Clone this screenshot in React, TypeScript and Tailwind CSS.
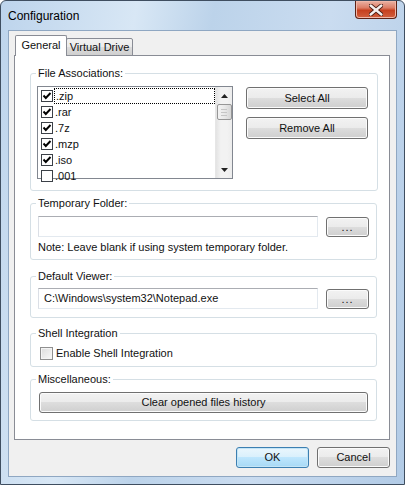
const font = { fontFamily: '"Liberation Sans", Arial, sans-serif' };

const extensions = [
  { ext: ".zip", checked: true },
  { ext: ".rar", checked: true },
  { ext: ".7z", checked: true },
  { ext: ".mzp", checked: true },
  { ext: ".iso", checked: true },
  { ext: ".001", checked: false },
];

function ListCheck({ checked }: { checked: boolean }) {
  return (
    <svg width="12" height="12" viewBox="0 0 12 12" className="shrink-0">
      <rect x="0.5" y="0.5" width="11" height="11" fill="#fff" stroke="#3b4047" />
      {checked && (
        <path d="M2.5 5.5 L4.8 8 L9.5 3" fill="none" stroke="#000" strokeWidth="1.9" />
      )}
    </svg>
  );
}

function Button({
  children,
  className = "",
  primary = false,
}: {
  children: React.ReactNode;
  className?: string;
  primary?: boolean;
}) {
  return (
    <button
      className={`rounded-[3px] border text-[11px] text-[#111] leading-none flex items-center justify-center ${
        primary
          ? "border-[#3c7fb1] bg-[linear-gradient(#eaf6fd_0%,#d9f0fc_50%,#bee6fd_50%,#a7d9f5_100%)] shadow-[inset_0_0_0_1px_#c4e5f6]"
          : "border-[#707070] bg-[linear-gradient(#f2f2f2_0%,#ebebeb_50%,#dddddd_50%,#cfcfcf_100%)] shadow-[inset_0_0_0_1px_#fbfbfb]"
      } ${className}`}
    >
      {children}
    </button>
  );
}

function Group({
  label,
  className = "",
  inner = "",
  children,
}: {
  label: string;
  className?: string;
  inner?: string;
  children: React.ReactNode;
}) {
  return (
    <fieldset className={`border border-[#d5dfe5] rounded-[3px] ${className}`}>
      <legend className="ml-[5px] px-[2px] text-[11px] leading-[13px] text-[#111]">
        {label}
      </legend>
      <div className={inner}>{children}</div>
    </fieldset>
  );
}

function TextBox({ value = "" }: { value?: string }) {
  return (
    <div className="w-[280px] h-[21px] border border-[#e3e9ef] border-t-[#abadb3] border-l-[#dbdfe6] bg-white flex items-center pl-[5px] text-[11px] text-[#111]">
      {value}
    </div>
  );
}

function Scrollbar() {
  return (
    <div className="w-[17px] h-full border-l border-[#e6e6e6] bg-[linear-gradient(90deg,#e3e3e3,#f2f2f2_30%,#f2f2f2_70%,#ececec)] flex flex-col items-center">
      <div className="h-[17px] w-full flex items-center justify-center">
        <svg width="7" height="4" viewBox="0 0 7 4">
          <path d="M0 4 L3.5 0 L7 4 Z" fill="#222" />
        </svg>
      </div>
      <div className="w-[15px] h-[16px] rounded-[2px] border border-[#969696] bg-[linear-gradient(90deg,#f3f3f3,#e8e8e8_50%,#d6d6d6)] flex flex-col items-center justify-center gap-[2px]">
        <div className="w-[6px] h-px bg-[#c5c5c5]" />
        <div className="w-[6px] h-px bg-[#c5c5c5]" />
        <div className="w-[6px] h-px bg-[#c5c5c5]" />
      </div>
      <div className="flex-1" />
      <div className="h-[17px] w-full flex items-center justify-center">
        <svg width="7" height="4" viewBox="0 0 7 4">
          <path d="M0 0 L3.5 4 L7 0 Z" fill="#222" />
        </svg>
      </div>
    </div>
  );
}

export default function App() {
  return (
    <div className="w-[405px] h-[485px] bg-white" style={font}>
      <div className="w-full h-full flex flex-col border border-[#3f4e60] rounded-t-[6px] bg-[linear-gradient(100deg,#bdd4ec_0%,#d8e7f5_28%,#bcd3ea_44%,#cadcf0_68%,#b2cbe6_100%)]">
        {/* title bar */}
        <div className="h-[29px] flex justify-between pl-[7px] pr-[7px] shrink-0">
          <span className="self-center text-[12px] text-black pt-[1px]">Configuration</span>
          <div className="w-[42px] h-[18px] rounded-b-[4px] border border-t-0 border-[#5d2216] bg-[linear-gradient(#eab2a4_0%,#dc7d66_40%,#c6401f_55%,#d2603f_100%)] flex items-center justify-center shadow-[inset_0_0_0_1px_#f0b7a8]">
            <svg width="14" height="12" viewBox="0 0 14 12">
              <path
                d="M1 1 L13 11 M13 1 L1 11"
                stroke="#4a1a10"
                strokeWidth="4.2"
                strokeLinecap="round"
              />
              <path
                d="M1.6 1.5 L12.4 10.5 M12.4 1.5 L1.6 10.5"
                stroke="#f4efee"
                strokeWidth="2.4"
                strokeLinecap="round"
              />
            </svg>
          </div>
        </div>

        {/* client area */}
        <div className="mx-[7px] h-[447px] shrink-0 border border-[#8fa7c2] bg-[#f0f0f0] flex flex-col pl-[5px] pr-[6px] pt-[4px]">
          {/* tabs */}
          <div className="flex items-end h-[21px] pl-[1px] relative z-10 -mb-px">
            <div className="h-[21px] w-[52px] bg-white border border-b-0 border-[#898c95] rounded-t-[2px] flex items-center justify-center text-[11px] text-[#111] pb-[1px]">
              General
            </div>
            <div className="h-[18px] w-[67px] -ml-px border border-[#898c95] rounded-t-[2px] bg-[linear-gradient(#f2f2f2_0%,#ebebeb_50%,#dddddd_50%,#cfcfcf_100%)] flex items-center justify-center text-[11px] text-[#111]">
              Virtual Drive
            </div>
          </div>

          {/* tab panel */}
          <div className="h-[385px] border border-[#898c95] bg-white pl-[15px] pr-[12px] pt-[11px] flex flex-col">
            <Group label="File Associations:" inner="pl-[6px] pr-[9px] pt-[6px] pb-[11px]">
              <div className="flex">
                <div className="w-[196px] h-[93px] border border-[#828790] flex">
                  <div className="flex-1 pt-px flex flex-col">
                    {extensions.map((item, i) => (
                      <div key={item.ext} className="h-[16px] flex items-center pl-[3px]">
                        <ListCheck checked={item.checked} />
                        <span
                          className={`flex-1 h-[16px] ml-px flex items-center text-[11px] text-[#111] pl-px ${
                            i === 0 ? "border border-dotted border-black" : ""
                          }`}
                        >
                          {item.ext}
                        </span>
                      </div>
                    ))}
                  </div>
                  <Scrollbar />
                </div>
                <div className="ml-[13px] pt-px flex flex-col gap-[8px]">
                  <Button className="w-[122px] h-[22px]">Select All</Button>
                  <Button className="w-[122px] h-[22px]">Remove All</Button>
                </div>
              </div>
            </Group>

            <Group label="Temporary Folder:" className="mt-[6px]" inner="pl-[7px] pt-[6px] pb-[5px]">
              <div className="flex items-start">
                <TextBox />
                <Button className="ml-[8px] mt-px w-[43px] h-[20px] tracking-[1px]">...</Button>
              </div>
              <p className="mt-[4px] text-[11px] leading-[13px] text-[#111]">
                Note: Leave blank if using system temporary folder.
              </p>
            </Group>

            <Group label="Default Viewer:" className="mt-[10px]" inner="pl-[7px] pt-[5px] pb-[8px]">
              <div className="flex items-start">
                <TextBox value="C:\Windows\system32\Notepad.exe" />
                <Button className="ml-[8px] mt-px w-[43px] h-[20px] tracking-[1px]">...</Button>
              </div>
            </Group>

            <Group label="Shell Integration" className="mt-[9px]" inner="pl-[9px] pt-[7px] pb-[6px]">
              <label className="flex items-center h-[13px] text-[11px] text-[#111]">
                <span className="w-[13px] h-[13px] border border-[#8f8f8f] bg-[linear-gradient(135deg,#dcdcdc,#f8f8f8)] shadow-[inset_0_0_0_1px_#f4f4f4]" />
                <span className="ml-[3px]">Enable Shell Integration</span>
              </label>
            </Group>

            <Group label="Miscellaneous:" className="mt-[6px]" inner="pl-[8px] pt-[6px] pb-[7px]">
              <Button className="w-[329px] h-[21px]">Clear opened files history</Button>
            </Group>
          </div>

          {/* dialog buttons */}
          <div className="mt-[7px] flex justify-end gap-[8px]">
            <Button primary className="w-[73px] h-[21px]">OK</Button>
            <Button className="w-[73px] h-[21px]">Cancel</Button>
          </div>
        </div>
      </div>
    </div>
  );
}
